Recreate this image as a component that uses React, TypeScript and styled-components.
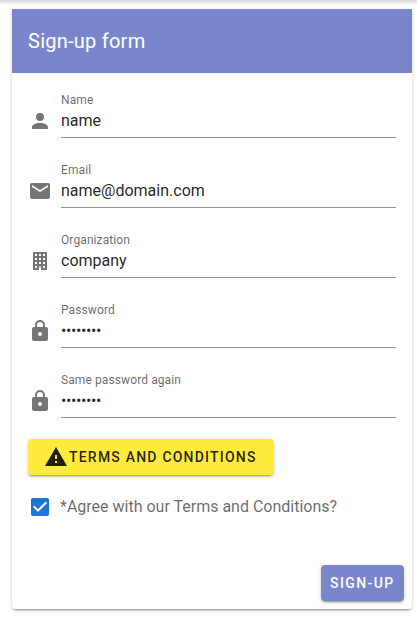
import React from 'react';
import styled, { createGlobalStyle } from 'styled-components';

const GlobalStyle = createGlobalStyle`
  *, *::before, *::after { box-sizing: border-box; }
  body {
    margin: 0;
    background: #fff;
    font-family: Roboto, "Liberation Sans", sans-serif;
    color: rgba(0, 0, 0, 0.87);
    overflow: hidden;
  }
`;

const raised =
  '0 3px 1px -2px rgba(0,0,0,.2), 0 2px 2px 0 rgba(0,0,0,.14), 0 1px 5px 0 rgba(0,0,0,.12)';

const Page = styled.main`
  height: 617px;
  padding: 9px 5px 8px 12px;
  background: linear-gradient(#d6d6d6 0, #e6e6e6 2px, #f7f7f7 4px, #fff 6px) no-repeat 0 0 / 100% 6px;
`;

const Card = styled.form`
  display: flex;
  flex-direction: column;
  width: 400px;
  height: 600px;
  background: #fff;
  border-radius: 0 0 4px 4px;
  box-shadow: ${raised};
`;

const Toolbar = styled.header`
  display: flex;
  align-items: center;
  height: 64px;
  padding: 0 16px;
  background: #7986cb;
  color: #fff;
`;

const Title = styled.h1`
  margin: 0;
  font-size: 20px;
  font-weight: 400;
  line-height: 30px;
  letter-spacing: 0.25px;
`;

const Content = styled.div`
  flex: 1;
  padding: 16px 16px 0;
`;

const Field = styled.div`
  display: flex;
  height: 70px;
  gap: 9px;
`;

const Icon = styled.svg`
  display: block;
  flex: none;
  width: 24px;
  height: 24px;
  fill: currentColor;
`;

const FieldIcon = styled(Icon)`
  margin-top: 20px;
  color: #757575;
`;

const Control = styled.label`
  display: flex;
  flex-direction: column;
  flex: 1;
  height: 49px;
  border-bottom: 1px solid #949494;
`;

const Label = styled.span`
  height: 20px;
  padding-top: 1px;
  font-size: 12px;
  line-height: 20px;
  color: rgba(0, 0, 0, 0.6);
  letter-spacing: 0.1px;
`;

const Input = styled.input`
  width: 100%;
  height: 24px;
  margin-top: -1px;
  padding: 2px 0;
  border: 0;
  outline: 0;
  background: transparent;
  font: 400 16px/20px Roboto, "Liberation Sans", sans-serif;
  letter-spacing: ${p => (p.type === 'password' ? '-0.4px' : 'normal')};
  color: rgba(0, 0, 0, 0.87);
`;

const Button = styled.button<{ $tone: 'warning' | 'primary' }>`
  display: inline-flex;
  align-items: center;
  justify-content: flex-start;
  gap: 1px;
  height: 36px;
  width: ${p => (p.$tone === 'warning' ? '245.5px' : '83px')};
  padding: 0 0 0 ${p => (p.$tone === 'warning' ? '16px' : '9px')};
  border: 0;
  border-radius: 4px;
  background: ${p => (p.$tone === 'warning' ? '#ffeb3b' : '#7986cb')};
  color: ${p => (p.$tone === 'warning' ? 'rgba(0,0,0,.87)' : '#fff')};
  font: 500 14px/20px Roboto, "Liberation Sans", sans-serif;
  letter-spacing: ${p => (p.$tone === 'warning' ? '1.21px' : '1.4px')};
  text-transform: uppercase;
  white-space: nowrap;
  box-shadow: ${raised};
`;

const Agreement = styled.label`
  display: flex;
  align-items: center;
  gap: 8px;
  height: 24px;
  margin-top: 20px;
  font-size: 16px;
  line-height: 20px;
  color: rgba(0, 0, 0, 0.6);
`;

const CheckIcon = styled(Icon)`
  color: #1976d2;
`;

const Actions = styled.footer`
  display: flex;
  justify-content: flex-end;
  padding: 8px;
`;

const icons = {
  account:
    'M12,4A4,4 0 0,1 16,8A4,4 0 0,1 12,12A4,4 0 0,1 8,8A4,4 0 0,1 12,4M12,14C16.42,14 20,15.79 20,18V20H4V18C4,15.79 7.58,14 12,14Z',
  email:
    'M20,8L12,13L4,8V6L12,11L20,6M20,4H4C2.89,4 2,4.89 2,6V18A2,2 0 0,0 4,20H20A2,2 0 0,0 22,18V6C22,4.89 21.1,4 20,4Z',
  building:
    'M5,3V21H11V17.5H13V21H19V3H5M7,5H9V7H7V5M11,5H13V7H11V5M15,5H17V7H15V5M7,9H9V11H7V9M11,9H13V11H11V9M15,9H17V11H15V9M7,13H9V15H7V13M11,13H13V15H11V13M15,13H17V15H15V13M7,17H9V19H7V17M15,17H17V19H15V17Z',
  lock:
    'M12,17A2,2 0 0,0 14,15C14,13.89 13.1,13 12,13A2,2 0 0,0 10,15A2,2 0 0,0 12,17M18,8A2,2 0 0,1 20,10V20A2,2 0 0,1 18,22H6A2,2 0 0,1 4,20V10C4,8.89 4.9,8 6,8H7V6A5,5 0 0,1 12,1A5,5 0 0,1 17,6V8H18M12,3A3,3 0 0,0 9,6V8H15V6A3,3 0 0,0 12,3Z',
  alert: 'M13,14H11V10H13M13,18H11V16H13M1,21H23L12,2L1,21Z',
  checked:
    'M10,17L5,12L6.41,10.58L10,14.17L17.59,6.58L19,8M19,3H5C3.89,3 3,3.89 3,5V19A2,2 0 0,0 5,21H19A2,2 0 0,0 21,19V5C21,3.89 20.1,3 19,3Z',
};

const fields = [
  { label: 'Name', value: 'name', type: 'text', icon: icons.account },
  { label: 'Email', value: 'name@domain.com', type: 'text', icon: icons.email },
  { label: 'Organization', value: 'company', type: 'text', icon: icons.building },
  { label: 'Password', value: 'password', type: 'password', icon: icons.lock },
  { label: 'Same password again', value: 'password', type: 'password', icon: icons.lock },
];

export default function App() {
  return (
    <>
      <GlobalStyle />
      <Page>
        <Card onSubmit={e => e.preventDefault()}>
          <Toolbar>
            <Title>Sign-up form</Title>
          </Toolbar>
          <Content>
            {fields.map(f => (
              <Field key={f.label}>
                <FieldIcon viewBox="0 0 24 24">
                  <path d={f.icon} />
                </FieldIcon>
                <Control>
                  <Label>{f.label}</Label>
                  <Input type={f.type} defaultValue={f.value} autoComplete="off" spellCheck={false} />
                </Control>
              </Field>
            ))}
            <Button type="button" $tone="warning">
              <Icon viewBox="0 0 24 24">
                <path d={icons.alert} />
              </Icon>
              Terms and Conditions
            </Button>
            <Agreement>
              <CheckIcon viewBox="0 0 24 24">
                <path d={icons.checked} />
              </CheckIcon>
              *Agree with our Terms and Conditions?
            </Agreement>
          </Content>
          <Actions>
            <Button type="submit" $tone="primary">
              Sign-up
            </Button>
          </Actions>
        </Card>
      </Page>
    </>
  );
}
